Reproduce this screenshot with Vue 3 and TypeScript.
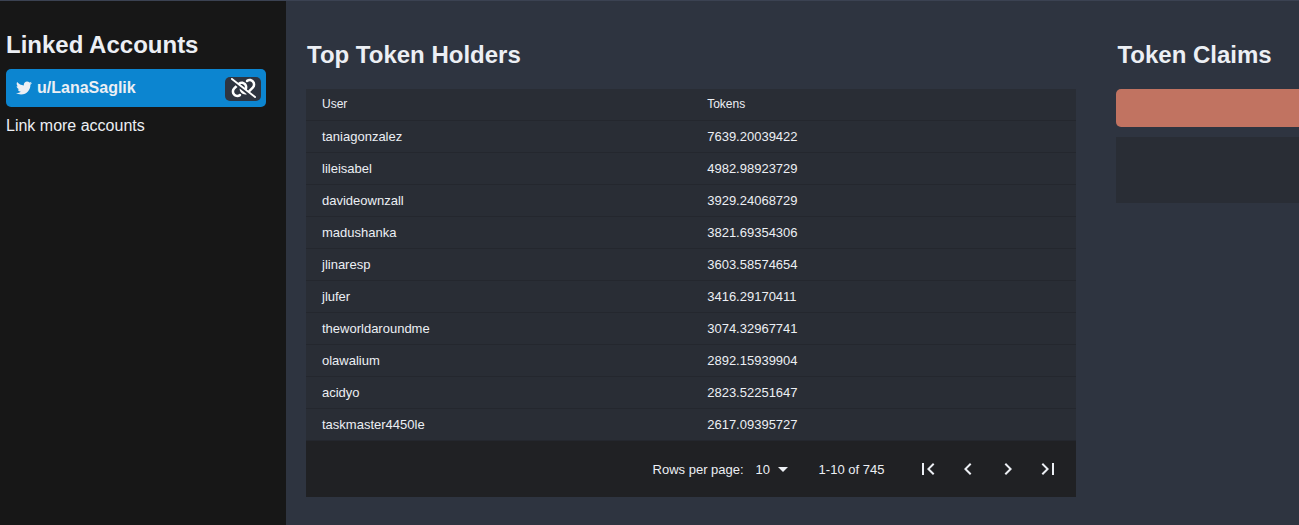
<script setup lang="ts">
import { ref } from 'vue'

interface Holder {
  user: string
  tokens: string
}

const holders: Holder[] = [
  { user: 'taniagonzalez', tokens: '7639.20039422' },
  { user: 'lileisabel', tokens: '4982.98923729' },
  { user: 'davideownzall', tokens: '3929.24068729' },
  { user: 'madushanka', tokens: '3821.69354306' },
  { user: 'jlinaresp', tokens: '3603.58574654' },
  { user: 'jlufer', tokens: '3416.29170411' },
  { user: 'theworldaroundme', tokens: '3074.32967741' },
  { user: 'olawalium', tokens: '2892.15939904' },
  { user: 'acidyo', tokens: '2823.52251647' },
  { user: 'taskmaster4450le', tokens: '2617.09395727' },
]

const rowsPerPage = ref<number>(10)
const pageButtons = [
  { label: 'First page', path: 'M18.41 16.59L13.82 12l4.59-4.59L17 6l-6 6 6 6zM6 6h2v12H6z' },
  { label: 'Previous page', path: 'M15.41 7.41L14 6l-6 6 6 6 1.41-1.41L10.83 12z' },
  { label: 'Next page', path: 'M10 6L8.59 7.41 13.17 12l-4.58 4.59L10 18l6-6z' },
  { label: 'Last page', path: 'M5.59 7.41L10.18 12l-4.59 4.59L7 18l6-6-6-6zM16 6h2v12h-2z' },
]
</script>

<template>
  <div class="page">
    <aside class="sidebar">
      <h2>Linked Accounts</h2>
      <div class="account">
        <svg class="bird" viewBox="0 0 512 512" aria-hidden="true">
          <path d="M459.37 151.716c.325 4.548.325 9.097.325 13.645 0 138.72-105.583 298.558-298.558 298.558-59.452 0-114.68-17.219-161.137-47.106 8.447.974 16.568 1.299 25.34 1.299 49.055 0 94.213-16.568 130.274-44.832-46.132-.975-84.792-31.188-98.112-72.772 6.498.974 12.995 1.624 19.818 1.624 9.421 0 18.843-1.3 27.614-3.573-48.081-9.747-84.143-51.98-84.143-102.985v-1.299c13.969 7.797 30.214 12.67 47.431 13.319-28.264-18.843-46.781-51.005-46.781-87.391 0-19.492 5.197-37.36 14.294-52.954 51.655 63.675 129.3 105.258 216.365 109.807-1.624-7.797-2.599-15.918-2.599-24.04 0-57.828 46.782-104.934 104.934-104.934 30.213 0 57.502 12.67 76.67 33.137 23.715-4.548 46.456-13.32 66.599-25.34-7.798 24.366-24.366 44.833-46.132 57.827 21.117-2.273 41.584-8.122 60.426-16.243-14.292 20.791-32.161 39.308-52.628 54.253z" />
        </svg>
        <span>u/LanaSaglik</span>
        <button class="unlink" type="button" aria-label="Unlink account">
          <svg viewBox="0 0 640 512" aria-hidden="true">
            <path d="M185.7 120.3C242.5 75.82 324.7 79.73 376.1 131.1C420.1 175.1 430.9 239.6 406.7 293.5L438.6 318.4L534.5 222.5C566 191 566 139.1 534.5 108.5C506.7 80.63 462.7 76.1 430.7 99.9L429.1 101C414.7 111.3 394.7 107.1 384.5 93.58C374.2 79.2 377.5 59.21 391.9 48.94L393.5 47.82C451 6.731 529.8 13.25 579.8 63.24C636.3 119.7 636.3 211.3 579.8 267.7L489.3 358.2L630.8 469.1C641.2 477.3 643.1 492.4 634.9 502.8C626.7 513.2 611.6 515.1 601.2 506.9L9.196 42.89C-1.236 34.71-3.065 19.63 5.112 9.196C13.29-1.236 28.37-3.065 38.81 5.112L185.7 120.3zM238.1 161.1L353.4 251.7C359.3 225.5 351.7 197.2 331.7 176.3C305.6 151.1 267.1 147.1 238.1 161.1zM263 380C233.1 350.1 218.7 309.8 220.9 270L406.6 416.4C357.4 431 301.9 418.9 263 380zM116.6 187.9L167.2 227.8L105.5 289.5C73.99 320.1 73.99 372 105.5 403.5C133.3 431.4 177.3 435 209.3 412.1L210.9 410.1C225.3 400.7 245.3 404 255.5 418.4C265.8 432.8 262.5 452.8 248.1 463.1L246.5 464.2C188.1 505.3 110.2 498.7 60.21 448.8C3.741 392.3 3.741 300.7 60.21 244.3L116.6 187.9z" />
          </svg>
        </button>
      </div>
      <a class="more" href="#">Link more accounts</a>
    </aside>

    <main class="content">
      <section class="panel">
        <h2>Top Token Holders</h2>
        <table>
          <thead>
            <tr><th scope="col">User</th><th scope="col">Tokens</th></tr>
          </thead>
          <tbody>
            <tr v-for="holder in holders" :key="holder.user">
              <td>{{ holder.user }}</td>
              <td>{{ holder.tokens }}</td>
            </tr>
          </tbody>
        </table>
        <nav class="pagination" aria-label="Table pages">
          <label for="rows">Rows per page:</label>
          <div class="select">
            <select id="rows" v-model="rowsPerPage">
              <option :value="10">10</option>
              <option :value="20">20</option>
              <option :value="50">50</option>
            </select>
            <svg viewBox="0 0 24 24" aria-hidden="true"><path d="M7 10l5 5 5-5z" /></svg>
          </div>
          <span class="range">1-10 of 745</span>
          <div class="buttons">
            <button v-for="button in pageButtons" :key="button.label" type="button" :aria-label="button.label">
              <svg viewBox="0 0 24 24" aria-hidden="true"><path :d="button.path" /></svg>
            </button>
          </div>
        </nav>
      </section>

      <section class="panel">
        <h2>Token Claims</h2>
        <div class="notice"></div>
        <div class="claims"></div>
      </section>
    </main>
  </div>
</template>

<style>
body {
  margin: 0;
  background: #2e3440;
}
</style>

<style scoped>
.page {
  box-sizing: border-box;
  display: flex;
  min-height: 100vh;
  overflow: hidden;
  border-top: 1px solid #3b4252;
  color: #eceff4;
  font: 16px/20px "Liberation Sans", Arial, sans-serif;
}

h2 {
  margin: 0;
  padding-left: 1px;
  font-size: 24px;
  line-height: 28px;
}

.sidebar {
  box-sizing: border-box;
  flex: 0 0 286px;
  padding: 30px 20px 20px 6px;
  background: #171717;
}

.sidebar h2 {
  padding-left: 0;
}

.account {
  display: flex;
  align-items: center;
  box-sizing: border-box;
  height: 38px;
  margin: 10px 0 9px;
  padding: 0 5px 0 10px;
  border-radius: 5px;
  background: #0c85d0;
  font-weight: bold;
}

.bird {
  width: 16px;
  height: 16px;
  margin-right: 5px;
  fill: #eceff4;
}

.unlink {
  display: flex;
  align-items: center;
  justify-content: center;
  width: 36px;
  height: 24px;
  margin: 2px 0 0 auto;
  padding: 0 0 2px;
  border: 0;
  border-radius: 5px;
  background: #2e3440;
}

.unlink svg {
  width: 25px;
  height: 20px;
  fill: #fff;
}

.more {
  color: #eceff4;
  text-decoration: none;
}

.content {
  display: flex;
  flex: 1;
  min-width: 0;
}

.panel {
  box-sizing: border-box;
  flex: 0 0 80%;
  padding: 40px 20px 20px;
}

.panel h2 {
  margin-bottom: 20px;
}

table {
  width: 100%;
  table-layout: fixed;
  border-collapse: separate;
  border-spacing: 0;
  background: #292d35;
  font-size: 13px;
  line-height: 15px;
}

th,
td {
  box-sizing: border-box;
  height: 32px;
  padding: 0 16px;
  border-bottom: 1px solid #24272e;
  text-align: left;
}

th {
  font-size: 12px;
  font-weight: normal;
}

.pagination {
  display: flex;
  align-items: center;
  justify-content: flex-end;
  box-sizing: border-box;
  height: 56px;
  padding: 0 8px;
  background: #202124;
  font-size: 13px;
  line-height: 18px;
}

.pagination label,
.range {
  padding-top: 1px;
}

.select {
  position: relative;
  margin: 0 24px 0 8px;
}

.select select {
  appearance: none;
  display: block;
  width: 43px;
  height: 24px;
  padding: 1px 4px 0;
  border: 0;
  background: transparent;
  color: inherit;
  font: inherit;
}

.select svg {
  position: absolute;
  top: 0;
  right: 0;
  width: 24px;
  height: 24px;
  fill: #eceff4;
  pointer-events: none;
}

.buttons {
  display: flex;
  margin-left: 24px;
}

.buttons button {
  display: grid;
  place-items: center;
  width: 40px;
  height: 40px;
  padding: 0;
  border: 0;
  background: transparent;
}

.buttons svg {
  width: 24px;
  height: 24px;
  fill: #eceff4;
}

.notice {
  height: 38px;
  margin-bottom: 10px;
  border-radius: 5px;
  background: #c17361;
}

.claims {
  height: 66px;
  background: #292d35;
}
</style>
